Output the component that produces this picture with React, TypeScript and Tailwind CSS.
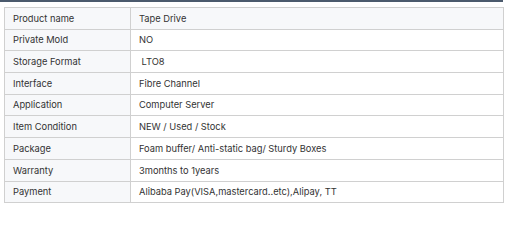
const rows: [string, string][] = [
  ["Product name", "Tape Drive"],
  ["Private Mold", "NO"],
  ["Storage Format", " LTO8"],
  ["Interface", "Fibre Channel"],
  ["Application", "Computer Server"],
  ["Item Condition", "NEW / Used / Stock"],
  ["Package", "Foam buffer/ Anti-static bag/ Sturdy Boxes"],
  ["Warranty", "3months to 1years"],
  ["Payment", "Alibaba Pay(VISA,mastercard..etc),Alipay, TT"],
];

export default function App() {
  return (
    <div className="w-[513px] h-[247px] bg-white" style={{ fontFamily: "Inter, 'Noto Sans', sans-serif" }}>
      <div className="w-[503px] h-[2px] bg-[#4b5a6d]" />
      <div className="pt-[5px] pl-[4px]">
        <table className="w-[500px] border-collapse text-[9.3px] text-[#333]">
          <tbody>
            {rows.map(([k, v], i) => (
              <tr key={k} className={i === 0 ? "bg-[#f7f8fa]" : "bg-white"}>
                <td className="w-[126px] h-[21.7px] border border-[#d0d0d0] bg-[#f7f8fa] px-[8px] py-0 leading-none">{k}</td>
                <td className="h-[21.7px] border border-[#d0d0d0] px-[8px] py-0 leading-none whitespace-pre">{v}</td>
              </tr>
            ))}
          </tbody>
        </table>
      </div>
    </div>
  );
}
